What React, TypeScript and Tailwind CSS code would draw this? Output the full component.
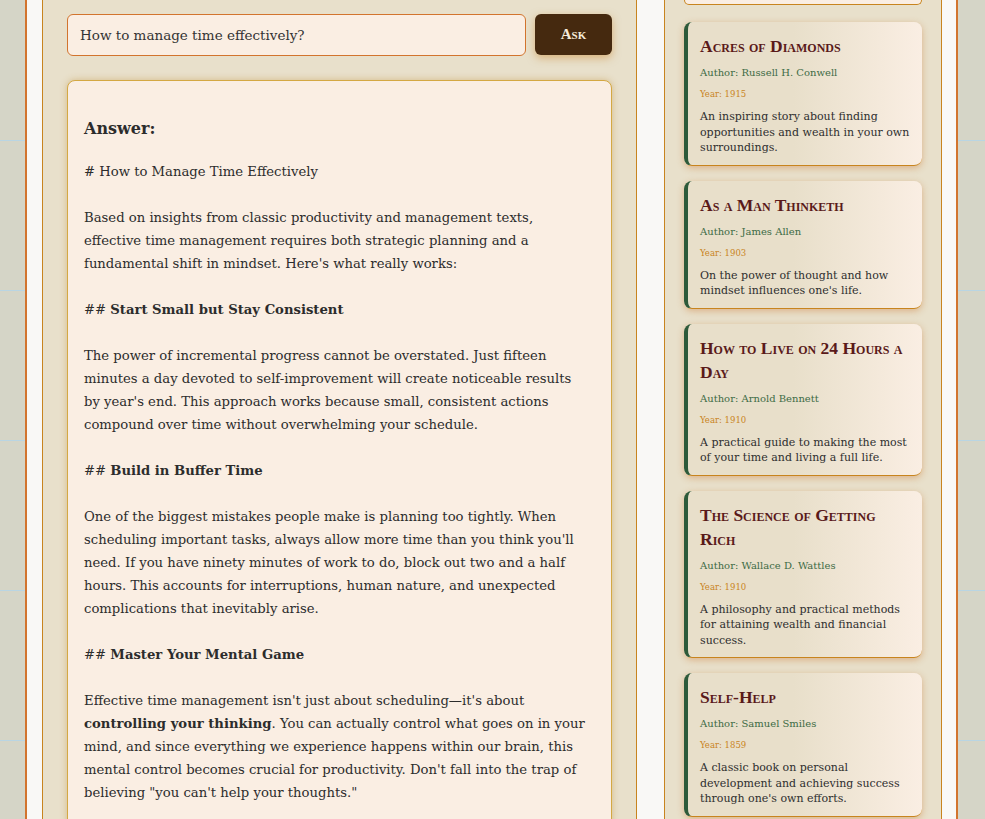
import type { ReactNode } from "react";

interface Book {
  title: string;
  author: string;
  year: string;
  description: string;
}

const books: Book[] = [
  {
    title: "Acres of Diamonds",
    author: "Russell H. Conwell",
    year: "1915",
    description:
      "An inspiring story about finding opportunities and wealth in your own surroundings.",
  },
  {
    title: "As a Man Thinketh",
    author: "James Allen",
    year: "1903",
    description: "On the power of thought and how mindset influences one's life.",
  },
  {
    title: "How to Live on 24 Hours a Day",
    author: "Arnold Bennett",
    year: "1910",
    description:
      "A practical guide to making the most of your time and living a full life.",
  },
  {
    title: "The Science of Getting Rich",
    author: "Wallace D. Wattles",
    year: "1910",
    description:
      "A philosophy and practical methods for attaining wealth and financial success.",
  },
  {
    title: "Self-Help",
    author: "Samuel Smiles",
    year: "1859",
    description:
      "A classic book on personal development and achieving success through one's own efforts.",
  },
];

function Para({ children }: { children: ReactNode }) {
  return <p className="mb-[23px]">{children}</p>;
}

function BookCard({ book }: { book: Book }) {
  return (
    <div className="rounded-lg border-l-4 border-b border-l-[#2d5a3a] border-b-[#c8841e] bg-[linear-gradient(90deg,#e8dfca_45%,#faeee3)] pb-[9px] pl-3 pr-3 pt-3 shadow-[0_2px_7px_rgba(205,120,50,0.45)]">
      <h3 className="font-['Liberation_Serif',serif] text-[17.5px] leading-6 font-bold text-[#5a1a1a] [font-variant:small-caps]">
        {book.title}
      </h3>
      <p className="mt-[7px] text-[10px] leading-[15px] text-[#3d6b45]">
        Author: {book.author}
      </p>
      <p className="mt-[8px] text-[8.5px] leading-[13px] text-[#c8841e]">
        Year: {book.year}
      </p>
      <p className="mt-[8px] text-[11px] leading-[15.5px] text-[#2e2e2e]">
        {book.description}
      </p>
    </div>
  );
}

export default function App() {
  return (
    <div className="h-[819px] overflow-hidden bg-[#d5d5c7] bg-[linear-gradient(to_bottom,transparent_140px,#b9d5e3_140px,#b9d5e3_141px,transparent_141px)] bg-[length:100%_150px] font-['DejaVu_Serif',serif]">
      <div className="ml-[25px] flex h-full w-[933px] gap-[27px] border-x-2 border-[#d2742e] bg-[#f9f8f6] px-[15px]">
        <main className="w-[595px] shrink-0 border-x border-[#c8841e] bg-[#e8e0cb] px-6 pt-[14px]">
          <div className="flex gap-[9px]">
            <input
              readOnly
              value="How to manage time effectively?"
              className="h-[42px] flex-1 rounded-md border border-[#d2742e] bg-[#faeee3] px-3 text-[13.5px] text-[#333] outline-none"
            />
            <button className="h-[41px] w-[77px] rounded-md bg-[#45290f] font-['Liberation_Serif',serif] text-[15px] font-bold text-[#f5ead8] shadow-[0_3px_8px_rgba(200,130,40,0.5)] [font-variant:small-caps]">
              Ask
            </button>
          </div>

          <div className="mt-6 rounded-lg border border-[#d4a843] bg-[#faeee3] pl-4 pr-[23px] pt-4 text-[13.2px] leading-[23px] text-[#2c2c2c] shadow-[0_0_7px_rgba(190,140,50,0.45)]">
            <h2 className="mt-5 mb-[19px] text-[16px] leading-6 font-bold">Answer:</h2>
            <Para># How to Manage Time Effectively</Para>
            <Para>
              Based on insights from classic productivity and management texts, effective time
              management requires both strategic planning and a fundamental shift in mindset.
              Here's what really works:
            </Para>
            <Para>
              ## <strong>Start Small but Stay Consistent</strong>
            </Para>
            <Para>
              The power of incremental progress cannot be overstated. Just fifteen minutes a day
              devoted to self-improvement will create noticeable results by year's end. This
              approach works because small, consistent actions compound over time without
              overwhelming your schedule.
            </Para>
            <Para>
              ## <strong>Build in Buffer Time</strong>
            </Para>
            <Para>
              One of the biggest mistakes people make is planning too tightly. When scheduling
              important tasks, always allow more time than you think you'll need. If you have
              ninety minutes of work to do, block out two and a half hours. This accounts for
              interruptions, human nature, and unexpected complications that inevitably arise.
            </Para>
            <Para>
              ## <strong>Master Your Mental Game</strong>
            </Para>
            <Para>
              Effective time management isn't just about scheduling—it's about{" "}
              <strong>controlling your thinking</strong>. You can actually control what goes on in
              your mind, and since everything we experience happens within our brain, this mental
              control becomes crucial for productivity. Don't fall into the trap of believing "you
              can't help your thoughts."
            </Para>
          </div>
        </main>

        <aside className="w-[278px] shrink-0 border-x border-[#c8841e] bg-[#e8e0cb] px-[19px]">
          <div className="h-[5px] rounded-b-lg border border-t-0 border-[#c8841e] bg-[#faeee3]" />
          <div className="mt-[17px] flex flex-col gap-[15px]">
            {books.map((book) => (
              <BookCard key={book.title} book={book} />
            ))}
          </div>
        </aside>
      </div>
    </div>
  );
}
